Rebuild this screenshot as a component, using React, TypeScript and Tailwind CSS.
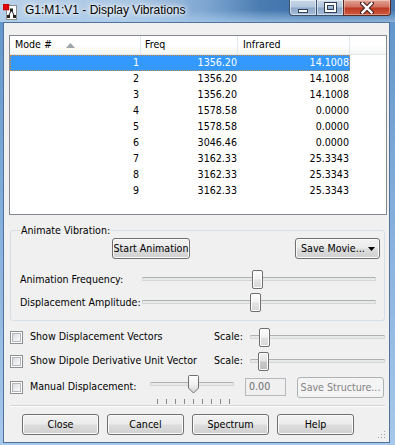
import React from "react";

const FONT = "font-['DejaVu_Sans_Condensed','Liberation_Sans',sans-serif]";

const rows: [string, string, string][] = [
  ["1", "1356.20", "14.1008"],
  ["2", "1356.20", "14.1008"],
  ["3", "1356.20", "14.1008"],
  ["4", "1578.58", "0.0000"],
  ["5", "1578.58", "0.0000"],
  ["6", "3046.46", "0.0000"],
  ["7", "3162.33", "25.3343"],
  ["8", "3162.33", "25.3343"],
  ["9", "3162.33", "25.3343"],
];

function Btn({ children, className = "", disabled = false }: { children: React.ReactNode; className?: string; disabled?: boolean }) {
  return (
    <div
      className={
        "h-[21px] flex items-center justify-center rounded-[3px] border leading-none whitespace-nowrap " +
        (disabled
          ? "border-[#adb2b5] bg-[#f4f4f4] text-[#838383] "
          : "border-[#707070] bg-[linear-gradient(180deg,#f2f2f2_0%,#ebebeb_48%,#dddddd_52%,#cfcfcf_100%)] text-black shadow-[inset_0_0_0_1px_#fbfbfb] ") +
        className
      }
    >
      {children}
    </div>
  );
}

function Thumb({ dark = false }: { dark?: boolean }) {
  return (
    <div
      className={
        "w-[11px] h-[19px] rounded-[2px] border border-[#6f6f6f] shadow-[inset_0_0_0_1px_#ffffff] " +
        (dark
          ? "bg-[linear-gradient(180deg,#f2f2f2_0%,#e4e4e4_45%,#c9c9c9_55%,#bdbdbd_100%)]"
          : "bg-[linear-gradient(180deg,#fdfdfd_0%,#f3f3f3_45%,#e2e2e2_55%,#d8d8d8_100%)]")
      }
    />
  );
}

function Slider({ width, thumbLeft, dark = false }: { width: number; thumbLeft: number; dark?: boolean }) {
  return (
    <div className="relative h-[19px] shrink-0" style={{ width }}>
      <div className="absolute left-0 right-0 top-[7px] h-[4px] rounded-[1px] border border-[#d6d6d6] border-t-[#b0b0b0] bg-[#e7eaea]" />
      <div className="absolute top-0" style={{ left: thumbLeft }}>
        <Thumb dark={dark} />
      </div>
    </div>
  );
}

function Check() {
  return (
    <div className="w-[13px] h-[13px] border border-[#8e8f8f] bg-white p-[1px] shrink-0">
      <div className="w-full h-full border border-[#b4b8bd] bg-[linear-gradient(135deg,#d9dbdf_0%,#eeeff0_60%,#fbfbfb_100%)]" />
    </div>
  );
}

export default function App() {
  return (
    <div
      className={
        "w-[395px] h-[445px] overflow-hidden relative bg-[linear-gradient(180deg,#5f93c9_0%,#86b0dc_50%,#a6c8ea_100%)] " +
        FONT
      }
    >
      {/* Title bar */}
      <div className="h-[22px] flex items-start bg-[linear-gradient(180deg,rgba(255,255,255,0)_45%,rgba(170,205,236,0.7)_100%),linear-gradient(90deg,#b9d1e9_0%,#a8c5e3_35%,#7ea6d1_52%,#4a7cb2_66%,#3c6fa7_80%,#4677ae_100%)]">
        <svg width="14" height="16" viewBox="0 0 14 16" className="ml-[3px] mt-[4px]">
          <rect x="3.5" y="1.5" width="10" height="14" fill="#fff" stroke="#8a8a8a" />
          <line x1="8.5" y1="6" x2="5.5" y2="12" stroke="#222" strokeWidth="1" />
          <line x1="8.5" y1="6" x2="11.5" y2="12" stroke="#222" strokeWidth="1" />
          <rect x="7" y="4.5" width="3" height="3" fill="#222" />
          <rect x="4" y="11" width="3" height="3" fill="#222" />
          <rect x="10" y="11" width="3" height="3" fill="#222" />
          <rect x="0" y="0" width="6" height="6" fill="#e00000" stroke="#900" strokeWidth="0.5" />
        </svg>
        <div className="ml-[8px] mt-[2px] text-[12px] leading-[16px] text-black font-['Liberation_Sans',sans-serif] [text-shadow:0_0_6px_#fff,0_0_10px_#fff,0_0_3px_#fff]">
          G1:M1:V1 - Display Vibrations
        </div>
        <div className="ml-auto mr-[4px] flex h-[16px]">
          <div className="w-[28px] h-full rounded-bl-[4px] border border-[#3b516e] border-t-0 bg-[linear-gradient(180deg,#c9d8e8_0%,#b3c7dd_45%,#8ea9c9_55%,#a4bcd7_100%)] flex items-center justify-center shadow-[inset_0_0_0_1px_rgba(255,255,255,0.5)]">
            <div className="w-[10px] h-[4px] bg-white border border-[#2f3f55] mt-[6px]" />
          </div>
          <div className="w-[26px] h-full border-b border-[#3b516e] bg-[linear-gradient(180deg,#c9d8e8_0%,#b3c7dd_45%,#8ea9c9_55%,#a4bcd7_100%)] flex items-center justify-center shadow-[inset_0_0_0_1px_rgba(255,255,255,0.5)]">
            <div className="w-[11px] h-[9px] border-[2px] border-white outline outline-1 outline-[#2f3f55] shadow-[inset_0_0_0_1px_#2f3f55]" />
          </div>
          <div className="w-[48px] h-full rounded-br-[4px] border border-[#5a2a25] border-t-0 bg-[linear-gradient(180deg,#e3a497_0%,#d2705f_45%,#bd3a25_55%,#cf5a3e_100%)] flex items-center justify-center shadow-[inset_0_0_0_1px_rgba(255,255,255,0.35)]">
            <svg width="14" height="12" viewBox="0 0 14 12">
              <path d="M2 1 L12 11 M12 1 L2 11" stroke="#4a2020" strokeWidth="4.5" strokeLinecap="square" />
              <path d="M2.5 1.5 L11.5 10.5 M11.5 1.5 L2.5 10.5" stroke="#fff" strokeWidth="2.4" strokeLinecap="square" />
            </svg>
          </div>
        </div>
      </div>

      {/* Client area */}
      <div className="ml-[3px] w-[387px] h-[421px] border border-[#51739b] bg-[#f0f0f0] relative flex flex-col text-[10.6px] text-black whitespace-nowrap">
        {/* List view */}
        <div className="mt-[12px] ml-[5px] w-[378px] h-[180px] border border-[#828790] bg-white flex flex-col">
          <div className="h-[19px] flex bg-[linear-gradient(180deg,#ffffff_0%,#ffffff_50%,#f5f6f7_100%)] border-b border-[#e5e5e5]">
            <div className="w-[131px] border-r border-[#e3e8ee] flex items-center pl-[5px] relative">
              Mode #
              <svg width="9" height="5" viewBox="0 0 9 5" className="absolute left-[56px] top-[7px]">
                <path d="M0 5 L4.5 0 L9 5 Z" fill="#9ea4ab" />
              </svg>
            </div>
            <div className="w-[97px] border-r border-[#e3e8ee] flex items-center pl-[4px]">Freq</div>
            <div className="w-[112px] border-r border-[#e3e8ee] flex items-center pl-[5px]">Infrared</div>
            <div className="flex-1" />
          </div>
          {rows.map((r, i) => (
            <div
              key={i}
              className={
                "h-[16px] w-[340px] flex items-center " +
                (i === 0 ? "bg-[#3399ff] text-white outline outline-1 -outline-offset-1 outline-dotted outline-[#c7864a]" : "")
              }
            >
              <div className="w-[131px] text-right pr-[2px]">{r[0]}</div>
              <div className="w-[97px] text-right pr-[1px]">{r[1]}</div>
              <div className="w-[112px] text-right pr-[1px]">{r[2]}</div>
            </div>
          ))}
        </div>

        {/* Group box */}
        <div className="mt-[15px] ml-[6px] w-[375px] h-[91px] border border-[#d5dfe5] rounded-[3px] relative flex flex-col">
          <div className="absolute left-[9px] top-[-8px] px-[1px] bg-[#f0f0f0] leading-[14px]">Animate Vibration:</div>
          <div className="mt-[7px] flex h-[21px]">
            <Btn className="ml-[101px] w-[78px]">Start Animation</Btn>
            <Btn className="ml-auto mr-[4px] w-[85px] justify-start pl-[5px] gap-[3px]">
              Save Movie...
              <svg width="7" height="4" viewBox="0 0 7 4">
                <path d="M0 0 L7 0 L3.5 4 Z" fill="#000" />
              </svg>
            </Btn>
          </div>
          <div className="mt-[11px] flex items-center h-[19px]">
            <div className="w-[131px] pl-[9px]">Animation Frequency:</div>
            <Slider width={234} thumbLeft={110} />
          </div>
          <div className="mt-[4px] flex items-center h-[19px]">
            <div className="w-[131px] pl-[9px]">Displacement Amplitude:</div>
            <Slider width={234} thumbLeft={108} />
          </div>
        </div>

        {/* Checkbox rows */}
        <div className="mt-[4px] h-[24px] flex items-center">
          <div className="ml-[6px]"><Check /></div>
          <div className="ml-[7px] w-[184px]">Show Displacement Vectors</div>
          <div className="w-[36px]">Scale:</div>
          <Slider width={135} thumbLeft={9} />
        </div>
        <div className="h-[24px] flex items-center">
          <div className="ml-[6px]"><Check /></div>
          <div className="ml-[7px] w-[184px]">Show Dipole Derivative Unit Vector</div>
          <div className="w-[36px]">Scale:</div>
          <Slider width={135} thumbLeft={8} dark />
        </div>
        <div className="mt-[4px] h-[20px] flex items-center">
          <div className="ml-[6px]"><Check /></div>
          <div className="ml-[7px] w-[120px]">Manual Displacement:</div>
          <div className="relative w-[84px] h-[20px] shrink-0">
            <div className="absolute left-0 right-0 top-[5px] h-[4px] rounded-[1px] border border-[#d6d6d6] border-t-[#b0b0b0] bg-[#e7eaea]" />
            <svg width="11" height="19" viewBox="0 0 11 19" className="absolute left-[38px] top-[-2px]">
              <defs>
                <linearGradient id="tg" x1="0" y1="0" x2="0" y2="1">
                  <stop offset="0" stopColor="#fdfdfd" />
                  <stop offset="0.5" stopColor="#f0f0f0" />
                  <stop offset="1" stopColor="#d6d6d6" />
                </linearGradient>
              </defs>
              <path d="M0.5 1.5 Q0.5 0.5 1.5 0.5 L9.5 0.5 Q10.5 0.5 10.5 1.5 L10.5 13 L5.5 18 L0.5 13 Z" fill="url(#tg)" stroke="#707070" />
            </svg>
            {[7, 16, 25, 34, 43, 52, 61, 70, 79].map((x) => (
              <div key={x} className="absolute top-[22px] w-[1px] h-[5px] bg-[#8a8a8a]" style={{ left: x }} />
            ))}
          </div>
          <div className="ml-[11px] w-[41px] h-[18px] border border-[#b5b8bc] bg-[#f0f0f0] text-[#6d6d6d] pl-[3px] flex items-center">0.00</div>
          <Btn disabled className="ml-[11px] w-[87px] h-[20px]">Save Structure...</Btn>
        </div>

        {/* Separator */}
        <div className="mt-[8px] ml-[6px] w-[375px] border-t border-[#d5d5d5] border-b border-b-white" />

        {/* Bottom buttons */}
        <div className="mt-[7px] flex">
          <Btn className="ml-[18px] w-[77px]">Close</Btn>
          <Btn className="ml-[8px] w-[77px]">Cancel</Btn>
          <Btn className="ml-[8px] w-[77px]">Spectrum</Btn>
          <Btn className="ml-[8px] w-[77px]">Help</Btn>
        </div>

        {/* Size grip */}
        <svg width="10" height="10" viewBox="0 0 10 10" className="absolute right-[3px] bottom-[3px]">
          {[[8, 2], [8, 5], [5, 5], [8, 8], [5, 8], [2, 8]].map(([x, y], i) => (
            <rect key={i} x={x} y={y} width="1" height="1" fill="#a0a0a0" />
          ))}
        </svg>
      </div>
    </div>
  );
}
